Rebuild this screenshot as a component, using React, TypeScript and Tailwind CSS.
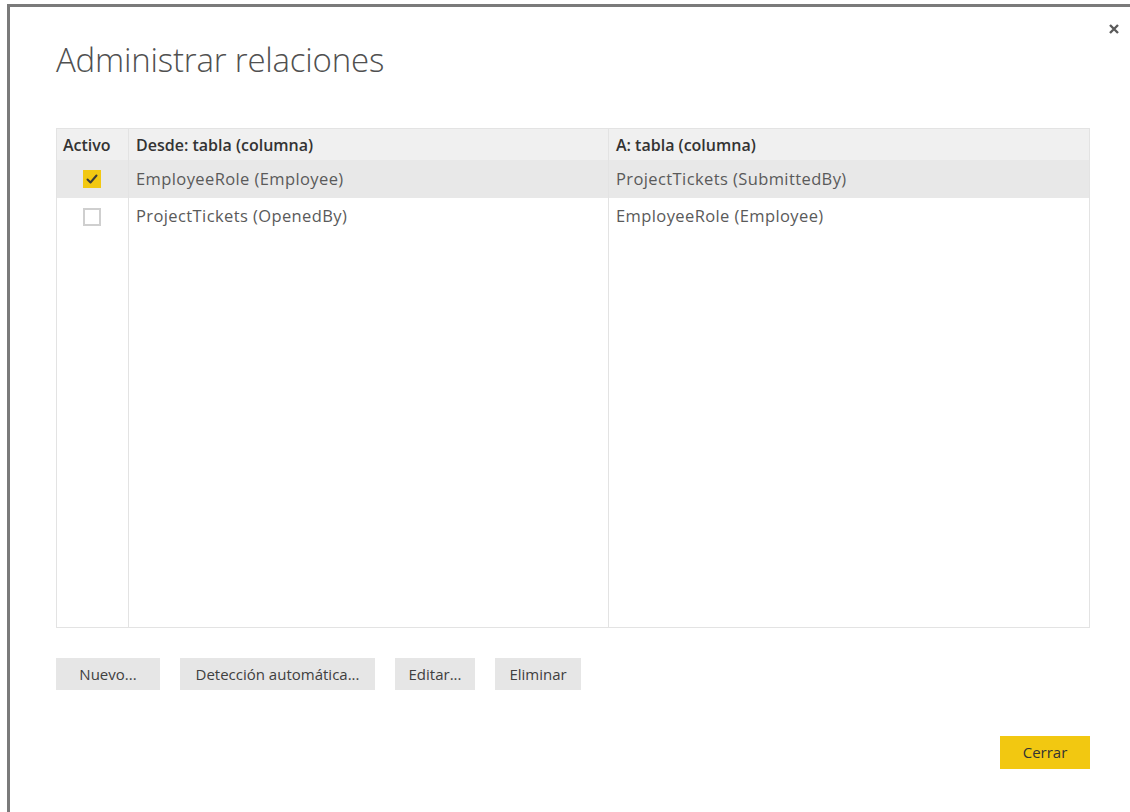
import * as React from 'react';

type Relation = { active: boolean; from: string; to: string };

const relations: Relation[] = [
  { active: true, from: 'EmployeeRole (Employee)', to: 'ProjectTickets (SubmittedBy)' },
  { active: false, from: 'ProjectTickets (OpenedBy)', to: 'EmployeeRole (Employee)' },
];

const font = { fontFamily: '"Open Sans", "Liberation Sans", sans-serif' };

const CheckBox = ({ checked }: { checked: boolean }) => {
  if (checked) {
    return (
      <div className="w-[18px] h-[18px] bg-[#f2c811] flex items-center justify-center">
        <svg width="12" height="12" viewBox="0 0 12 12" fill="none">
          <path d="M1.5 6.5L4.5 9.5L10.5 2.5" stroke="#3a3a3a" strokeWidth="2" strokeLinecap="round" strokeLinejoin="round" />
        </svg>
      </div>
    );
  }
  return <div className="w-[18px] h-[18px] border-2 border-[#cfcfcf] bg-white" />;
};

const GrayButton = ({ label, width }: { label: string; width: string }) => (
  <button className={`${width} h-[32px] bg-[#e6e6e6] text-[#404040] text-[15px] flex items-center justify-center`}>{label}</button>
);

export default function App() {
  return (
    <div className="w-[1130px] h-[812px] bg-white pt-[4px] pl-[7px] overflow-hidden" style={font}>
      <div className="relative h-full border-l-[3px] border-t-[3px] border-[#7a7a7a] flex flex-col pl-[46px] pr-[40px]">
        <button className="absolute top-[16px] right-[10px] w-[12px] h-[12px] flex items-center justify-center">
          <svg width="10" height="10" viewBox="0 0 10 10">
            <path d="M1 1L9 9M9 1L1 9" stroke="#5a5a5a" strokeWidth="2.4" />
          </svg>
        </button>

        <h1 className="mt-[33px] text-[33px] font-light text-[#505050] leading-[40px] tracking-[-0.2px]">Administrar relaciones</h1>

        <div className="mt-[48px] h-[500px] border border-[#e3e3e3] grid grid-cols-[72px_480px_1fr] grid-rows-[31px_38px_37px_1fr]">
          <div className="bg-[#f0f0f0] border-r border-[#e3e3e3] flex items-center pl-[6px] text-[16px] font-semibold text-[#333]">Activo</div>
          <div className="bg-[#f0f0f0] border-r border-[#e3e3e3] flex items-center pl-[7px] text-[16px] font-semibold text-[#333]">Desde: tabla (columna)</div>
          <div className="bg-[#f0f0f0] flex items-center pl-[7px] text-[16px] font-semibold text-[#333]">A: tabla (columna)</div>

          {relations.map((r, i) => (
            <React.Fragment key={i}>
              <div className={`${r.active ? 'bg-[#e8e8e8]' : ''} border-r border-[#e3e3e3] flex items-center justify-center pr-[2px]`}>
                <CheckBox checked={r.active} />
              </div>
              <div className={`${r.active ? 'bg-[#e8e8e8]' : ''} border-r border-[#e3e3e3] flex items-center pl-[7px] text-[16.5px] tracking-[0.4px] text-[#5a5a5a]`}>{r.from}</div>
              <div className={`${r.active ? 'bg-[#e8e8e8]' : ''} flex items-center pl-[7px] text-[16.5px] tracking-[0.4px] text-[#5a5a5a]`}>{r.to}</div>
            </React.Fragment>
          ))}

          <div className="border-r border-[#e3e3e3]" />
          <div className="border-r border-[#e3e3e3]" />
          <div />
        </div>

        <div className="mt-[30px] flex gap-[20px]">
          <GrayButton label="Nuevo..." width="w-[104px]" />
          <GrayButton label="Detección automática..." width="w-[195px]" />
          <GrayButton label="Editar..." width="w-[80px]" />
          <GrayButton label="Eliminar" width="w-[86px]" />
        </div>

        <div className="mt-[46px] flex justify-end">
          <button className="w-[90px] h-[33px] bg-[#f2c811] text-[#333] text-[15px] flex items-center justify-center">Cerrar</button>
        </div>
      </div>
    </div>
  );
}
